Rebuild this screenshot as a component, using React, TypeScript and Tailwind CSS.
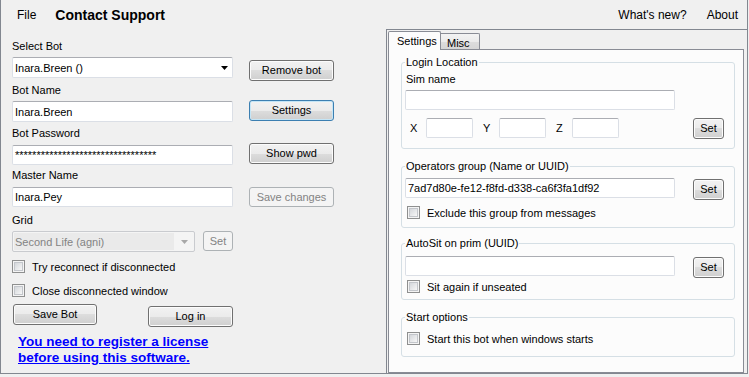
import type { ReactNode } from "react";

const btnFace =
  "bg-[linear-gradient(#f2f2f2,#ebebeb_50%,#dddddd_50%,#cfcfcf)] shadow-[inset_0_0_0_1px_#fcfcfc]";

function Button({
  label,
  className = "",
  focused = false,
  disabled = false,
}: {
  label: string;
  className?: string;
  focused?: boolean;
  disabled?: boolean;
}) {
  let look = `border-[#707070] ${btnFace} text-black`;
  if (focused) look = "border-[#3c7fb1] bg-[linear-gradient(#f2f2f2,#ebebeb_50%,#dddddd_50%,#cfcfcf)] shadow-[inset_0_0_0_1px_#c4e5f6] text-black";
  if (disabled) look = "border-[#adb2b5] bg-[#f4f4f4] text-[#838383]";
  return (
    <button
      type="button"
      className={`flex items-center justify-center shrink-0 rounded-[3px] border text-[11px] leading-none ${look} ${className}`}
    >
      {label}
    </button>
  );
}

function TextBox({ value = "", className = "" }: { value?: string; className?: string }) {
  return (
    <div
      className={`flex items-center shrink-0 rounded-[2px] border border-[#dbdfe6] border-t-[#abadb3] bg-white pl-[2px] whitespace-nowrap overflow-hidden ${className}`}
    >
      {value}
    </div>
  );
}

function Check({ label }: { label: string }) {
  return (
    <div className="flex items-center h-[13px]">
      <div className="w-[13px] h-[13px] shrink-0 border border-[#8e8f8f] bg-[#f4f4f4] p-[1px]">
        <div className="w-full h-full border border-[#c3c6cb] bg-linear-to-br from-[#d4d7db] to-[#f7f7f7]" />
      </div>
      <span className="ml-[7px] whitespace-nowrap">{label}</span>
    </div>
  );
}

// group box: legend sits on the top border line
function Group({ title, className = "", children }: { title: string; className?: string; children: ReactNode }) {
  return (
    <div className={`relative w-[334px] shrink-0 border border-[#d5dfe5] rounded-[3px] pl-[3px] pr-[10px] ${className}`}>
      <span className="absolute left-[3px] top-[-8px] px-[1px] leading-[14px] bg-[#fcfcfc] whitespace-nowrap">
        {title}
      </span>
      {children}
    </div>
  );
}

function MenuBar() {
  return (
    <div className="h-[29px] flex items-center text-[12px] shrink-0">
      <span className="ml-[16px]">File</span>
      <span className="ml-[19px] font-bold text-[14px]">Contact Support</span>
      <span className="ml-auto">What's new?</span>
      <span className="ml-[20px] mr-[9px]">About</span>
    </div>
  );
}

function LeftPanel() {
  return (
    <div className="w-[385px] shrink-0 flex flex-col pl-[11px] pt-[10px]">
      <div>Select Bot</div>
      <div className="mt-[4px] flex items-start">
        <div className="w-[221px] h-[21px] flex items-center rounded-[2px] border border-[#dbdfe6] border-t-[#abadb3] bg-white pl-[2px]">
          <span>Inara.Breen ()</span>
          <svg className="ml-auto mr-[4px]" width="7" height="4" viewBox="0 0 7 4">
            <polygon points="0,0 7,0 3.5,4" fill="#000" />
          </svg>
        </div>
        <Button label="Remove bot" className="ml-[16px] mt-[3px] w-[85px] h-[21px]" />
      </div>

      <div className="mt-[2px]">Bot Name</div>
      <div className="mt-[3px] flex items-start">
        <TextBox value="Inara.Breen" className="w-[221px] h-[21px] mt-[1px]" />
        <Button label="Settings" focused className="ml-[16px] w-[85px] h-[21px]" />
      </div>

      <div className="mt-[4px]">Bot Password</div>
      <div className="mt-[3px] flex items-start">
        <TextBox value="*********************************" className="w-[221px] h-[20px] mt-[2px]" />
        <Button label="Show pwd" className="ml-[16px] w-[85px] h-[21px]" />
      </div>

      <div className="mt-[3px]">Master Name</div>
      <div className="mt-[5px] flex items-start">
        <TextBox value="Inara.Pey" className="w-[221px] h-[20px]" />
        <Button label="Save changes" disabled className="ml-[16px] w-[85px] h-[20px]" />
      </div>

      <div className="mt-[6px]">Grid</div>
      <div className="mt-[4px] flex items-start">
        <div className="w-[183px] h-[21px] flex items-center rounded-[2px] border border-[#c9cbcf] bg-[#f4f4f4] p-[1px]">
          <div className="w-[160px] h-full flex items-center bg-[#eaeaea] pl-[1px] text-[#838383]">
            Second Life (agni)
          </div>
          <svg className="ml-auto mr-[5px]" width="7" height="4" viewBox="0 0 7 4">
            <polygon points="0,0 7,0 3.5,4" fill="#a8a8a8" />
          </svg>
        </div>
        <Button label="Set" disabled className="ml-[8px] w-[30px] h-[20px]" />
      </div>

      <div className="mt-[8px]">
        <Check label="Try reconnect if disconnected" />
      </div>
      <div className="mt-[11px]">
        <Check label="Close disconnected window" />
      </div>

      <div className="mt-[7px] flex items-start">
        <Button label="Save Bot" className="ml-[1px] w-[84px] h-[21px]" />
        <Button label="Log in" className="ml-[51px] mt-[2px] w-[85px] h-[21px]" />
      </div>

      <div className="mt-[7px] ml-[6px] text-[13.5px] leading-[16px] font-bold text-[#0000ff] underline">
        You need to register a license
        <br />
        before using this software.
      </div>
    </div>
  );
}

function RightPanel() {
  return (
    <div className="w-[361px] shrink-0 flex flex-col border-l border-t border-[#828790] pl-[1px] pt-[1px]">
      <div className="w-[356px] flex-1 flex flex-col">
        <div className="h-[18px] flex items-end shrink-0">
          <div className="relative z-10 mb-[-1px] h-[19px] w-[53px] flex items-center pl-[8px] rounded-t-[2px] border-l border-t border-r border-[#898c95] bg-[#fcfcfc]">
            Settings
          </div>
          <div className="h-[16px] w-[39px] flex items-center pl-[6px] pt-[2px] rounded-tr-[2px] border-t border-r border-[#898c95] bg-[linear-gradient(#f3f3f3,#ebebeb_50%,#dddddd_50%,#d6d6d6)]">
            Misc
          </div>
        </div>
        <div className="flex-1 flex flex-col border border-[#898c95] bg-[#fcfcfc] pl-[12px]">
          <Group title="Login Location" className="mt-[12px] pb-[9px]">
            <div className="mt-[9px] pl-[1px]">Sim name</div>
            <TextBox className="mt-[4px] w-[270px] h-[20px]" />
            <div className="mt-[8px] flex items-start h-[21px]">
              <span className="ml-[5px] w-[16px] h-[20px] flex items-center">X</span>
              <TextBox className="w-[47px] h-[20px]" />
              <span className="ml-[10px] w-[16px] h-[20px] flex items-center">Y</span>
              <TextBox className="w-[47px] h-[20px]" />
              <span className="ml-[10px] w-[16px] h-[20px] flex items-center">Z</span>
              <TextBox className="w-[47px] h-[20px]" />
              <Button label="Set" className="ml-auto w-[31px] h-[21px]" />
            </div>
          </Group>

          <Group title="Operators group (Name or UUID)" className="mt-[17px] pb-[8px]">
            <div className="mt-[11px] flex items-start">
              <TextBox value="7ad7d80e-fe12-f8fd-d338-ca6f3fa1df92" className="w-[270px] h-[20px]" />
              <Button label="Set" className="ml-auto mt-[1px] w-[31px] h-[21px]" />
            </div>
            <div className="mt-[6px] ml-[2px]">
              <Check label="Exclude this group from messages" />
            </div>
          </Group>

          <Group title="AutoSit on prim (UUID)" className="mt-[15px] pb-[6px]">
            <div className="mt-[12px] flex items-start">
              <TextBox className="w-[270px] h-[20px]" />
              <Button label="Set" className="ml-auto mt-[1px] w-[31px] h-[21px]" />
            </div>
            <div className="mt-[2px] ml-[2px]">
              <Check label="Sit again if unseated" />
            </div>
          </Group>

          <Group title="Start options" className="mt-[17px] pb-[11px]">
            <div className="mt-[14px] ml-[2px]">
              <Check label="Start this bot when windows starts" />
            </div>
          </Group>
        </div>
      </div>
    </div>
  );
}

export default function App() {
  return (
    <div className="w-[749px] h-[377px] bg-[#f0f0f0] font-['Liberation_Sans',Arial,sans-serif] text-black text-[11px] leading-[14px]">
      <div className="w-[748px] h-[374px] flex flex-col border-l border-r border-b border-[#828790]">
        <MenuBar />
        <div className="flex flex-1 min-h-0">
          <LeftPanel />
          <RightPanel />
        </div>
      </div>
    </div>
  );
}
